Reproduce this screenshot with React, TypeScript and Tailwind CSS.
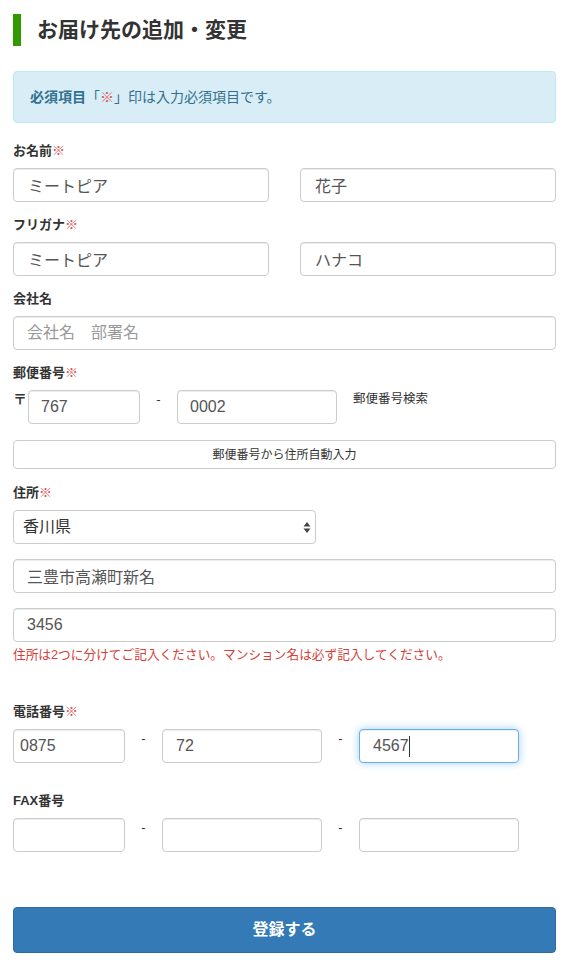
import { ReactNode } from "react";

const inputBase =
  "h-[34px] rounded-[4px] border border-[#cccccc] bg-white text-[16px] text-[#555555] shadow-[inset_0_1px_1px_rgba(0,0,0,0.075)] outline-none placeholder:text-[#999999]";

function Label({ children, required }: { children: ReactNode; required?: boolean }) {
  return (
    <div className="h-[18px] text-[13px] leading-[18px] font-bold text-[#333333]">
      {children}
      {required && <span className="font-normal text-[#d9534f]">※</span>}
    </div>
  );
}

function Dash() {
  return (
    <span className="w-[37px] shrink-0 pt-[3px] text-center text-[13px] leading-[14px] text-[#333333]">
      -
    </span>
  );
}

function SelectArrows() {
  return (
    <svg width="8" height="11" viewBox="0 0 8 11" className="absolute right-[5px] top-[12px]">
      <path d="M4 0 L7.5 4.5 L0.5 4.5 Z" fill="#444" />
      <path d="M4 11 L7.5 6.5 L0.5 6.5 Z" fill="#444" />
    </svg>
  );
}

export default function App() {
  return (
    <div
      className="w-[565px] min-h-[960px] bg-white pt-[14px] pl-[13px] pr-[9px] text-[#333333]"
      style={{ fontFamily: '"Liberation Sans", "Noto Sans CJK JP", sans-serif' }}
    >
      {/* heading */}
      <div className="flex h-[32px] items-center">
        <div className="h-[32px] w-[8px] bg-[#339900]" />
        <h1 className="ml-[16px] text-[21px] font-bold text-[#333333]">お届け先の追加・変更</h1>
      </div>

      {/* notice */}
      <div className="mt-[25px] flex h-[52px] items-center rounded-[4px] border border-[#bce8f1] bg-[#d9edf7] pl-[16px] text-[14px] text-[#31708f]">
        <span className="font-bold">必須項目</span>
        <span>「</span>
        <span className="text-[#d9534f]">※</span>
        <span>」印は入力必須項目です。</span>
      </div>

      {/* name */}
      <div className="mt-[19px]">
        <Label required>お名前</Label>
        <div className="mt-[8px] grid grid-cols-2 gap-x-[31px]">
          <input className={inputBase + " w-full pl-[14px]"} defaultValue="ミートピア" readOnly />
          <input className={inputBase + " w-full pl-[14px]"} defaultValue="花子" readOnly />
        </div>
      </div>

      <div className="mt-[14px]">
        <Label required>フリガナ</Label>
        <div className="mt-[8px] grid grid-cols-2 gap-x-[31px]">
          <input className={inputBase + " w-full pl-[14px]"} defaultValue="ミートピア" readOnly />
          <input className={inputBase + " w-full pl-[14px]"} defaultValue="ハナコ" readOnly />
        </div>
      </div>

      <div className="mt-[14px]">
        <Label>会社名</Label>
        <input className={inputBase + " mt-[8px] w-full pl-[13px]"} placeholder="会社名　部署名" readOnly />
      </div>

      {/* postal code */}
      <div className="mt-[14px]">
        <Label required>郵便番号</Label>
        <div className="mt-[8px] flex items-start">
          <span className="w-[15px] shrink-0 pt-[1px] text-[14px] leading-[16px] font-bold text-[#333333]">〒</span>
          <input className={inputBase + " w-[112px] pl-[12px]"} defaultValue="767" readOnly />
          <Dash />
          <input className={inputBase + " w-[160px] pl-[12px]"} defaultValue="0002" readOnly />
          <span className="ml-[16px] pt-[1px] text-[12.5px] leading-[16px] text-[#333333]">郵便番号検索</span>
        </div>
      </div>

      <button className="mt-[16px] flex h-[29px] w-full items-center justify-center rounded-[4px] border border-[#cccccc] bg-white text-[12px] text-[#333333]">
        郵便番号から住所自動入力
      </button>

      {/* address */}
      <div className="mt-[15px]">
        <Label required>住所</Label>
        <div className="relative mt-[8px] w-[303px]">
          <select
            className="h-[34px] w-full appearance-none rounded-[4px] border border-[#cccccc] bg-white pl-[9px] text-[16px] text-[#333333] outline-none"
            defaultValue="香川県"
          >
            <option>香川県</option>
          </select>
          <SelectArrows />
        </div>
      </div>

      <input className={inputBase + " mt-[15px] block w-full pl-[13px]"} defaultValue="三豊市高瀬町新名" readOnly />
      <input className={inputBase + " mt-[15px] block w-full pl-[13px]"} defaultValue="3456" readOnly />
      <p className="mt-[5px] text-[12.7px] leading-[17px] text-[#d43f3a]">
        住所は2つに分けてご記入ください。マンション名は必ず記入してください。
      </p>

      {/* phone */}
      <div className="mt-[39px]">
        <Label required>電話番号</Label>
        <div className="mt-[8px] flex items-start">
          <input className={inputBase + " w-[112px] pl-[6px]"} defaultValue="0875" readOnly />
          <Dash />
          <input className={inputBase + " w-[160px] pl-[13px]"} defaultValue="72" readOnly />
          <Dash />
          <div className="relative w-[160px]">
            <input
              className="h-[34px] w-full rounded-[4px] border border-[#66afe9] bg-white pl-[13px] text-[16px] text-[#555555] shadow-[inset_0_1px_1px_rgba(0,0,0,0.075),0_0_8px_rgba(102,175,233,0.6)] outline-none"
              defaultValue="4567"
              readOnly
            />
            <span className="absolute left-[50px] top-[7px] h-[21px] w-px bg-[#333333]" />
          </div>
        </div>
      </div>

      {/* fax */}
      <div className="mt-[29px]">
        <Label>FAX番号</Label>
        <div className="mt-[8px] flex items-start">
          <input className={inputBase + " w-[112px] pl-[6px]"} readOnly />
          <Dash />
          <input className={inputBase + " w-[160px] pl-[13px]"} readOnly />
          <Dash />
          <input className={inputBase + " w-[160px] pl-[13px]"} readOnly />
        </div>
      </div>

      <button className="mt-[55px] flex h-[46px] w-full items-center justify-center rounded-[4px] border border-[#2e6da4] bg-[#337ab7] text-[16px] font-bold text-white">
        登録する
      </button>
    </div>
  );
}
